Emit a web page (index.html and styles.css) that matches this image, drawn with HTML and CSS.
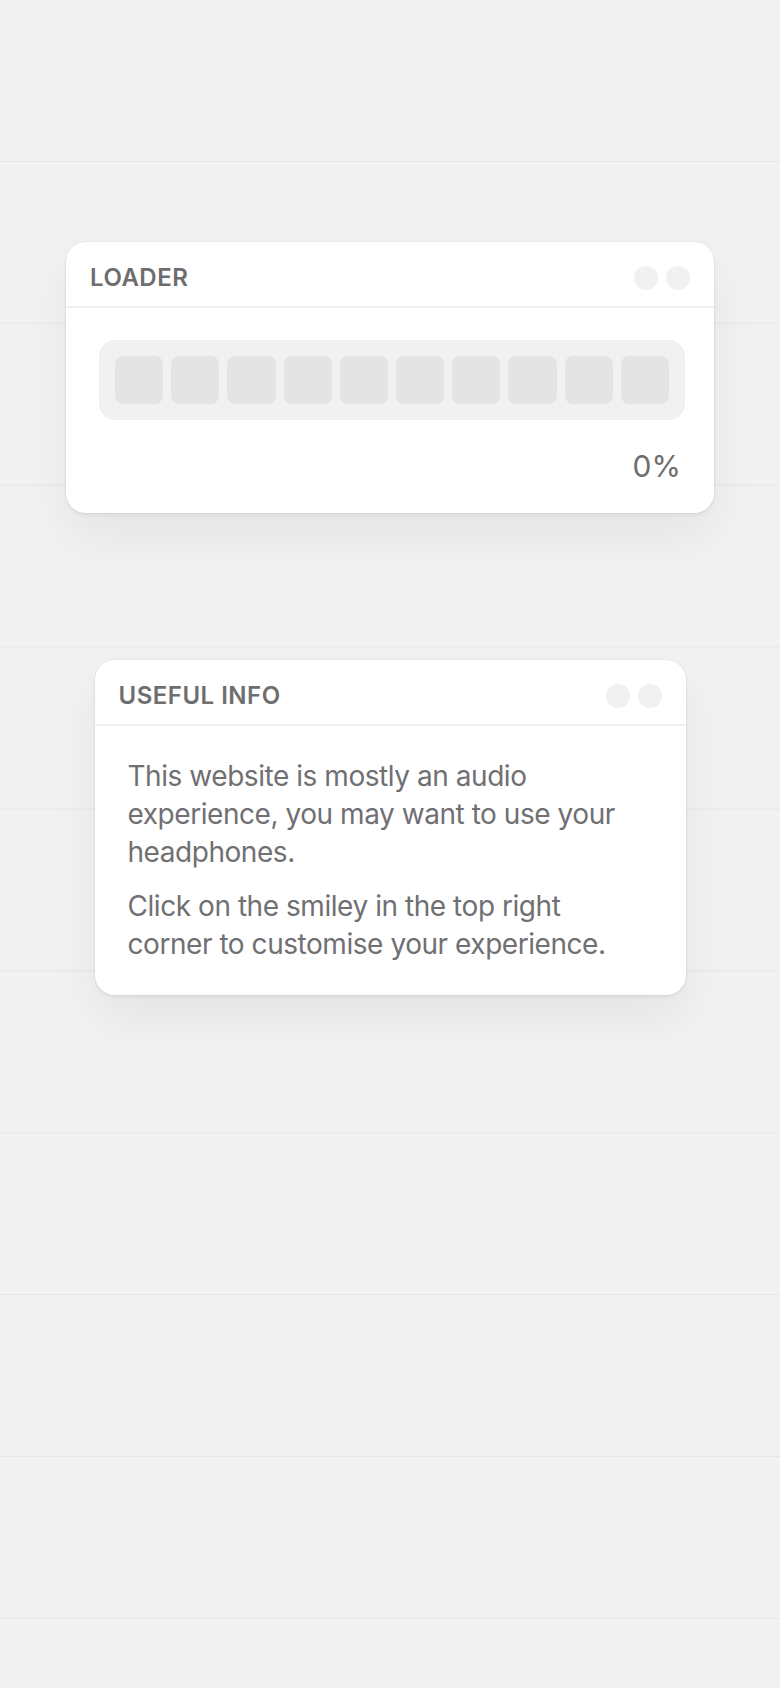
FILE: index.html
```html
<!DOCTYPE html>
<html lang="en">
<head>
<meta charset="utf-8">
<title>Loader</title>
<link rel="stylesheet" href="styles.css">
</head>
<body>
<main class="stage">
  <section class="window window-loader">
    <header class="window-head">
      <h2 class="window-title">LOADER</h2>
      <div class="window-dots"><span class="dot"></span><span class="dot"></span></div>
    </header>
    <div class="loader-body">
      <div class="track">
        <span class="cell"></span><span class="cell"></span><span class="cell"></span><span class="cell"></span><span class="cell"></span>
        <span class="cell"></span><span class="cell"></span><span class="cell"></span><span class="cell"></span><span class="cell"></span>
      </div>
      <div class="percent">0%</div>
    </div>
  </section>

  <section class="window window-info">
    <header class="window-head">
      <h2 class="window-title">USEFUL INFO</h2>
      <div class="window-dots"><span class="dot"></span><span class="dot"></span></div>
    </header>
    <div class="info-body">
      <p>This website is mostly an audio experience, you may want to use your headphones.</p>
      <p>Click on the smiley in the top right corner to customise your experience.</p>
    </div>
  </section>
</main>
</body>
</html>
```

FILE: styles.css
```css
* { box-sizing: border-box; }

html, body {
  margin: 0;
  padding: 0;
}

body {
  min-height: 1688px;
  background-color: #f1f1f1;
  background-image: linear-gradient(to bottom, transparent 0, transparent 160.9px, #e6e6e6 160.9px, #e6e6e6 161.9px);
  background-size: 100% 161.9px;
  background-repeat: repeat-y;
  font-family: Inter, "Liberation Sans", sans-serif;
  color: #707070;
}

.stage {
  display: flex;
  flex-direction: column;
  align-items: center;
  padding-top: 242px;
  gap: 147px;
}

.window {
  background: #ffffff;
  border-radius: 20px;
  box-shadow: 0 0 0 1px rgba(0, 0, 0, 0.025), 0 2px 4px rgba(0, 0, 0, 0.06), 0 24px 48px rgba(0, 0, 0, 0.05);
}

.window-loader { width: 648px; }
.window-info { width: 591px; }

.window-head {
  display: flex;
  align-items: center;
  justify-content: space-between;
  padding: 24px 24px 16px 24px;
  border-bottom: 2px solid #efefef;
}

.window-title {
  margin: 0;
  font-size: 24px;
  line-height: 24px;
  font-weight: 600;
  letter-spacing: 0.5px;
  color: #6e6e6e;
}

.window-dots {
  display: flex;
  gap: 8px;
}

.dot {
  width: 24px;
  height: 24px;
  border-radius: 50%;
  background: #f1f1f1;
}

.loader-body {
  padding: 32px 29px 30px 33px;
}

.track {
  display: flex;
  gap: 8px;
  padding: 16px;
  background: #f1f1f1;
  border-radius: 16px;
}

.cell {
  flex: 1 1 0;
  height: 48px;
  border-radius: 8px;
  background: #e4e4e4;
}

.percent {
  margin-top: 29px;
  text-align: right;
  padding-right: 4px;
  font-size: 30px;
  line-height: 34px;
  font-weight: 400;
  color: #6e6e6e;
}

.info-body {
  padding: 31px 44px 32px 33px;
}

.info-body p {
  margin: 0;
  font-size: 28px;
  line-height: 38px;
  letter-spacing: -0.45px;
  color: #707074;
}

.info-body p + p {
  margin-top: 16px;
}
```
